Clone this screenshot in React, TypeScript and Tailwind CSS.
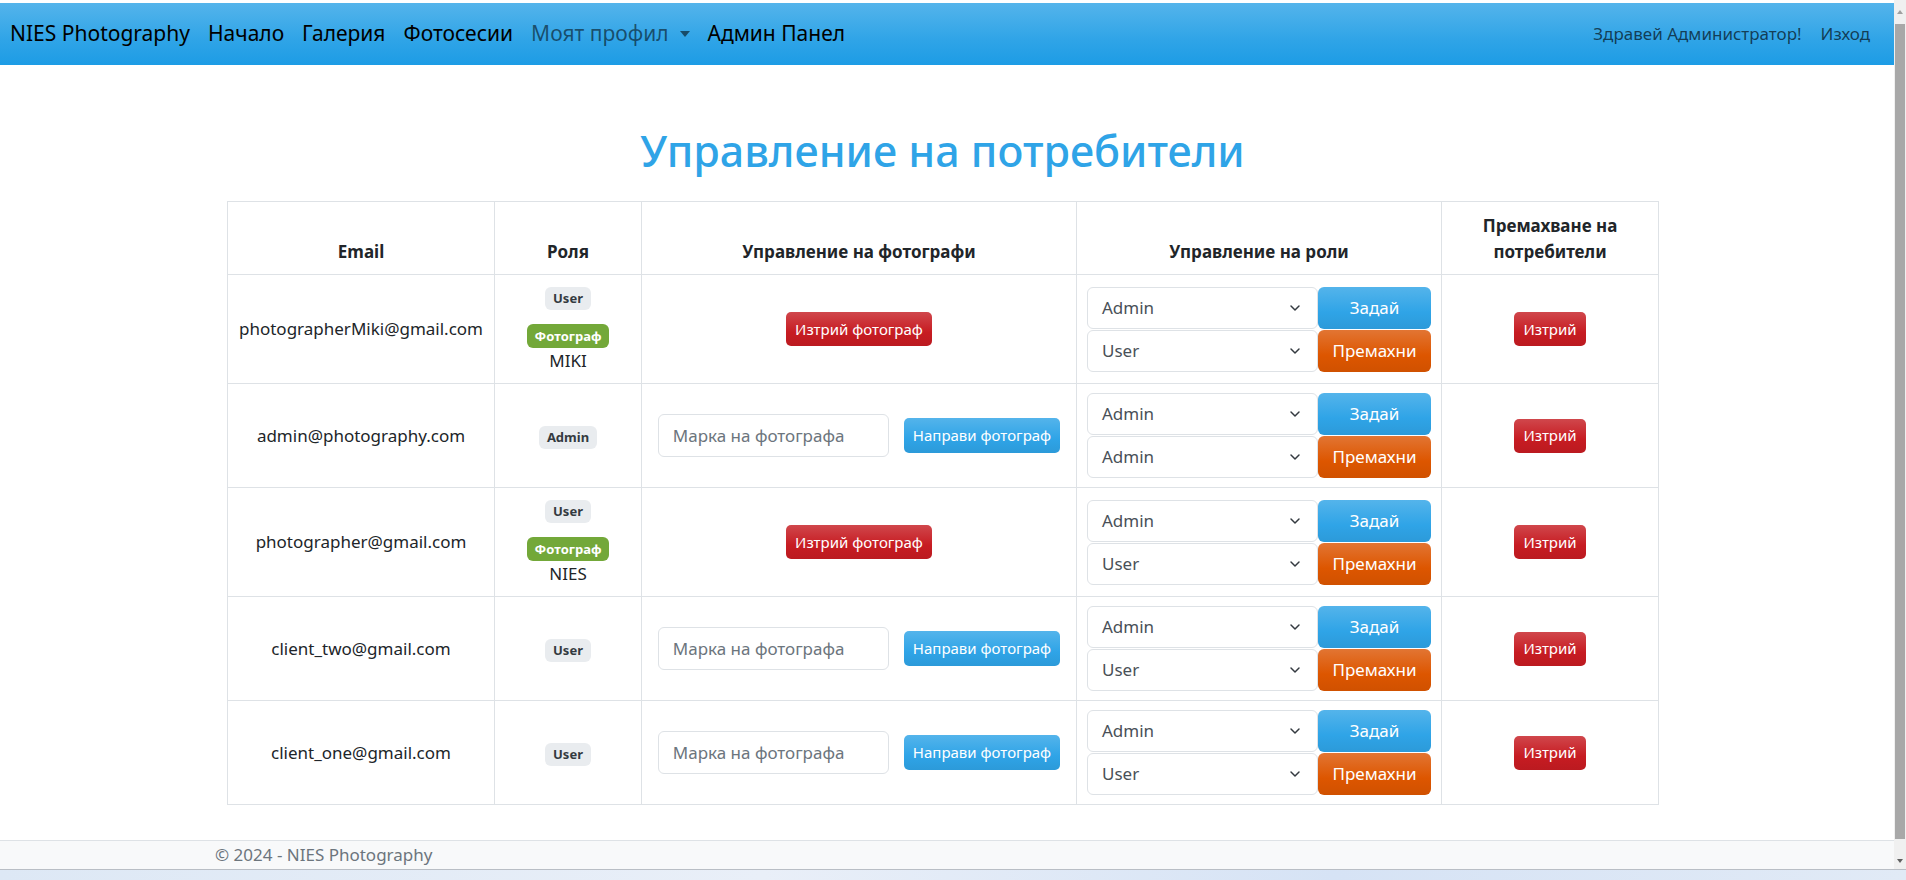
import { ChevronDown } from "lucide-react"

type Row = {
  email: string
  roles: string[]
  name?: string
  photographer: boolean
  remove: string
}

const rows: Row[] = [
  { email: "photographerMiki@gmail.com", roles: ["User", "Фотограф"], name: "MIKI", photographer: true, remove: "User" },
  { email: "admin@photography.com", roles: ["Admin"], photographer: false, remove: "Admin" },
  { email: "photographer@gmail.com", roles: ["User", "Фотограф"], name: "NIES", photographer: true, remove: "User" },
  { email: "client_two@gmail.com", roles: ["User"], photographer: false, remove: "User" },
  { email: "client_one@gmail.com", roles: ["User"], photographer: false, remove: "User" },
]

const td = "border border-[#dee2e6] px-[9px] py-[9px] text-center align-middle"
const th = "border border-[#dee2e6] px-[9px] py-[9px] text-center align-bottom font-bold leading-[26px]"
const grayBadge = "inline-block rounded-[6px] bg-[#e9ecef] px-[8px] text-[13px] font-bold leading-[23px] text-[#343a40]"
const greenBadge = "inline-block rounded-[6px] bg-[#73a839] px-[8px] text-[13px] font-bold leading-[24px] text-white"
const btnSm = "inline-flex h-[34px] items-center justify-center rounded-[5px] px-[9px] text-[15px] text-white"
const red = "bg-[linear-gradient(#d0474c,#c71c22_60%,#bb1a20)]"
const blue = "bg-[linear-gradient(#54b4eb,#2fa4e7_60%,#2c9ad9)]"
const orange = "bg-[linear-gradient(#e27533,#dd5600_60%,#d05100)]"
const link = "px-[9px] text-[21px] text-black"

const Select = ({ value }: { value: string }) => (
  <div className="flex flex-1 items-center justify-between rounded-[6px] border border-[#dee2e6] bg-white pl-[14px] pr-[14px] text-[17px] text-[#495057]">
    <span>{value}</span>
    <ChevronDown size={16} strokeWidth={2.2} className="text-[#343a40]" />
  </div>
)

const RoleCell = ({ r }: { r: Row }) => {
  if (r.roles.length === 1) {
    return <span className={grayBadge}>{r.roles[0]}</span>
  }
  return (
    <div className="flex flex-col items-center">
      <span className={grayBadge + " mt-[3px]"}>User</span>
      <span className={greenBadge + " mt-[14px]"}>Фотограф</span>
      <span className="leading-[26px] text-[#212529]">{r.name}</span>
    </div>
  )
}

const App = () => {
  return (
    <div className="flex h-[880px] flex-col overflow-hidden bg-white font-['Noto_Sans',sans-serif] text-[17px] text-[#212529]">
      <div className="flex h-[869px]">
        <div className="flex flex-1 flex-col pt-[3px]">
          <nav className="flex h-[62px] items-center bg-[linear-gradient(#54b4eb,#2fa4e7_60%,#1d9ce5)] pl-[10px] pr-[24px]">
            <span className="mr-[9px] text-[21px] text-black">NIES Photography</span>
            <span className={link}>Начало</span>
            <span className={link}>Галерия</span>
            <span className={link}>Фотосесии</span>
            <span className="flex items-center px-[9px] text-[21px] text-black/55">
              Моят профил
              <span className="ml-[11px] h-0 w-0 border-x-[5px] border-t-[6px] border-x-transparent border-t-black/55" />
            </span>
            <span className={link}>Админ Панел</span>
            <div className="ml-auto flex items-center gap-[19px] text-[17px] text-black/65">
              <span>Здравей Администратор!</span>
              <span>Изход</span>
            </div>
          </nav>

          <main className="flex-1">
            <div className="ml-[227px] w-[1431px]">
              <h1 className="mt-[59px] mb-[24px] text-center text-[43px] font-medium leading-[53px] text-[#2fa4e7]">
                Управление на потребители
              </h1>
              <table className="w-full table-fixed border-collapse">
                <colgroup>
                  <col className="w-[267px]" />
                  <col className="w-[147px]" />
                  <col className="w-[435px]" />
                  <col className="w-[365px]" />
                  <col className="w-[217px]" />
                </colgroup>
                <thead>
                  <tr className="h-[73px]">
                    <th className={th}>Email</th>
                    <th className={th}>Роля</th>
                    <th className={th}>Управление на фотографи</th>
                    <th className={th}>Управление на роли</th>
                    <th className={th}>Премахване на потребители</th>
                  </tr>
                </thead>
                <tbody>
                  {rows.map((r) => (
                    <tr key={r.email}>
                      <td className={td}>{r.email}</td>
                      <td className={td}>
                        <RoleCell r={r} />
                      </td>
                      <td className={td}>
                        {r.photographer ? (
                          <span className={btnSm + " " + red}>Изтрий фотограф</span>
                        ) : (
                          <div className="flex items-center justify-center gap-[15px]">
                            <input
                              placeholder="Марка на фотографа"
                              className="h-[43px] w-[231px] rounded-[6px] border border-[#dee2e6] px-[14px] text-[17px] outline-none placeholder:text-[#6c757d]"
                            />
                            <span className={btnSm + " h-[35px] " + blue}>Направи фотограф</span>
                          </div>
                        )}
                      </td>
                      <td className={td + " px-[10px]"}>
                        <div className="flex flex-col gap-[1px]">
                          <div className="flex h-[42px]">
                            <Select value="Admin" />
                            <span className={"flex w-[113px] items-center justify-center rounded-[6px] text-white " + blue}>Задай</span>
                          </div>
                          <div className="flex h-[42px]">
                            <Select value={r.remove} />
                            <span className={"flex w-[113px] items-center justify-center rounded-[6px] text-white " + orange}>Премахни</span>
                          </div>
                        </div>
                      </td>
                      <td className={td}>
                        <span className={btnSm + " h-[33px] " + red}>Изтрий</span>
                      </td>
                    </tr>
                  ))}
                </tbody>
              </table>
            </div>
          </main>

          <footer className="flex h-[29px] items-center border-t border-[#dee2e6] bg-[#f8f9fa] pl-[215px] text-[17px] text-[#6c757d]">
            © 2024 - NIES Photography
          </footer>
        </div>

        <div className="flex w-[12px] flex-col bg-[#f0f0f0]">
          <div className="flex h-[24px] items-center justify-center">
            <span className="h-0 w-0 border-x-[3px] border-b-[4px] border-x-transparent border-b-[#a0a0a0]" />
          </div>
          <div className="mx-[1px] h-[815px] bg-[#a8a8a8]" />
          <div className="flex flex-1 items-end justify-center pb-[6px]">
            <span className="h-0 w-0 border-x-[3px] border-t-[4px] border-x-transparent border-t-[#606060]" />
          </div>
        </div>
      </div>
      <div className="h-[11px] border-t border-[#b9bec5] bg-[linear-gradient(90deg,#dde8f5,#e9eff8_40%,#d6e3f5_70%,#e1eaf6)]" />
    </div>
  )
}

export default App
